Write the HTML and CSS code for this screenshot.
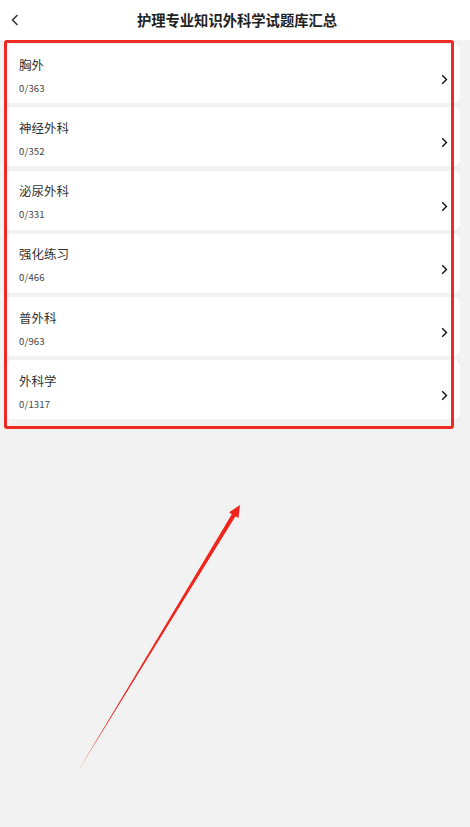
FILE: index.html
```html
<!DOCTYPE html>
<html lang="zh">
<head>
<meta charset="utf-8">
<title>护理专业知识外科学试题库汇总</title>
<link rel="stylesheet" href="styles.css">
</head>
<body>
<div class="page">
  <header class="topbar">
    <svg class="back" width="10" height="12" viewBox="0 0 10 12"><path d="M7 1.5 L2.5 6 L7 10.5" fill="none" stroke="#333" stroke-width="1.6" stroke-linecap="round" stroke-linejoin="round"/></svg>
    <h1 class="title">护理专业知识外科学试题库汇总</h1>
  </header>
  <main class="list">
    <div class="card"><div class="info"><div class="name">胸外</div><div class="count">0/363</div></div><svg class="chev" width="7" height="11" viewBox="0 0 7 11"><path d="M1.2 1.2 L5.5 5.5 L1.2 9.8" fill="none" stroke="#111" stroke-width="1.4"/></svg></div>
    <div class="card"><div class="info"><div class="name">神经外科</div><div class="count">0/352</div></div><svg class="chev" width="7" height="11" viewBox="0 0 7 11"><path d="M1.2 1.2 L5.5 5.5 L1.2 9.8" fill="none" stroke="#111" stroke-width="1.4"/></svg></div>
    <div class="card"><div class="info"><div class="name">泌尿外科</div><div class="count">0/331</div></div><svg class="chev" width="7" height="11" viewBox="0 0 7 11"><path d="M1.2 1.2 L5.5 5.5 L1.2 9.8" fill="none" stroke="#111" stroke-width="1.4"/></svg></div>
    <div class="card"><div class="info"><div class="name">强化练习</div><div class="count">0/466</div></div><svg class="chev" width="7" height="11" viewBox="0 0 7 11"><path d="M1.2 1.2 L5.5 5.5 L1.2 9.8" fill="none" stroke="#111" stroke-width="1.4"/></svg></div>
    <div class="card"><div class="info"><div class="name">普外科</div><div class="count">0/963</div></div><svg class="chev" width="7" height="11" viewBox="0 0 7 11"><path d="M1.2 1.2 L5.5 5.5 L1.2 9.8" fill="none" stroke="#111" stroke-width="1.4"/></svg></div>
    <div class="card"><div class="info"><div class="name">外科学</div><div class="count">0/1317</div></div><svg class="chev" width="7" height="11" viewBox="0 0 7 11"><path d="M1.2 1.2 L5.5 5.5 L1.2 9.8" fill="none" stroke="#111" stroke-width="1.4"/></svg></div>
  </main>
  <div class="highlight"></div>
  <svg class="arrow" width="470" height="827" viewBox="0 0 470 827">
    <polygon points="78,771 231.8,514.2 229.1,512.3 240,505 238.5,518.1 235.5,516.2" fill="#f0261e"/>
  </svg>
</div>
</body>
</html>
```
FILE: styles.css
```css
* { box-sizing: border-box; }
html, body { margin: 0; padding: 0; }
body {
  background: #f2f2f2;
  font-family: "Noto Sans CJK SC", "Noto Sans", sans-serif;
  color: #333;
}
.page {
  position: relative;
  width: 470px;
  height: 827px;
  overflow: hidden;
}
.topbar {
  height: 40px;
  background: #fff;
  display: flex;
  align-items: center;
  justify-content: center;
  position: relative;
}
.back {
  position: absolute;
  left: 10px;
  top: 14px;
}
.title {
  margin: 0;
  font-size: 14.3px;
  font-weight: 700;
  color: #222;
  line-height: 1;
  padding-left: 4px;
}
.list {
  display: flex;
  flex-direction: column;
  gap: 4.3px;
  padding: 4px 10px 0 6px;
}
.card {
  height: 59px;
  background: #fff;
  border-radius: 6px;
  display: flex;
  align-items: center;
  justify-content: space-between;
  padding: 0 12px 0 13px;
}
.info {
  display: flex;
  flex-direction: column;
  gap: 9px;
  margin-top: 3px;
}
.name {
  font-size: 12.5px;
  line-height: 16px;
  color: #333;
}
.count {
  font-size: 9.5px;
  line-height: 12px;
  color: #444;
  letter-spacing: 0.2px;
}
.chev { margin-top: 12px; }
.highlight {
  position: absolute;
  left: 4px;
  top: 40px;
  width: 450px;
  height: 389px;
  border: 3px solid #ee2a24;
  border-radius: 3px;
}
.arrow {
  position: absolute;
  left: 0;
  top: 0;
}
```
